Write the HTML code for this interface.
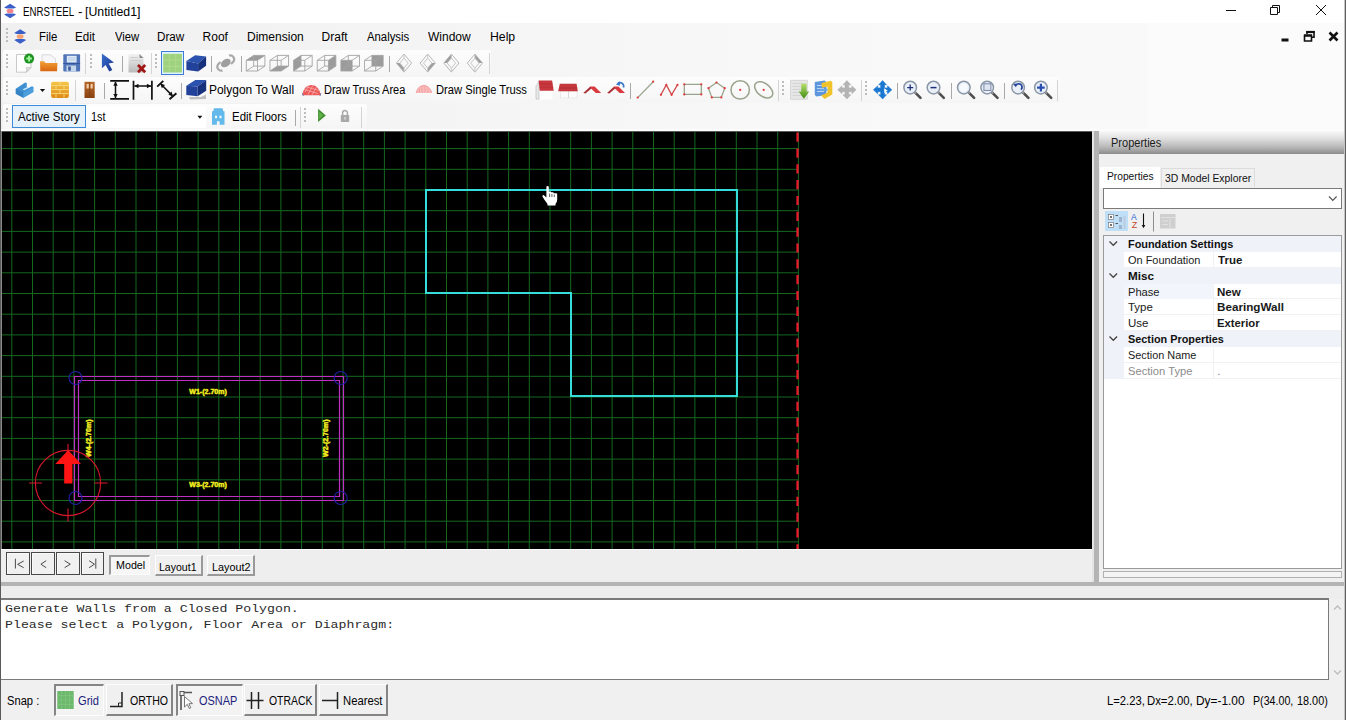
<!DOCTYPE html>
<html lang="en"><head><meta charset="utf-8"><title>ENRSTEEL - [Untitled1]</title>
<style>
html,body{margin:0;padding:0}
body{width:1346px;height:720px;overflow:hidden;background:#f0f0f0;position:relative;font-family:"Liberation Sans",sans-serif}
.a{position:absolute}
.t{position:absolute;white-space:pre;transform-origin:0 50%;display:block}
svg{position:absolute;overflow:visible}
.sep{position:absolute;width:1px;background:#a9a9a9}
.sepl{position:absolute;width:1px;background:#d4d4d4}
.grip{position:absolute;width:2px;height:2px;background:#bcbcbc;box-shadow:0 4px 0 #bcbcbc,0 8px 0 #bcbcbc,0 12px 0 #bcbcbc}
.tb{position:absolute;background:linear-gradient(#fdfdfd,#f5f5f5);border-radius:2px}
</style></head>
<body>
<div class="a" style="left:0;top:0;width:1346px;height:23px;background:#fff"></div>
<span class="t" style="left:22.9px;top:6px;font:400 12px/12px 'Liberation Sans',sans-serif;color:#000;transform:scaleX(0.8065);">ENRSTEEL </span><span class="t" style="left:78.0px;top:6px;font:400 12px/12px 'Liberation Sans',sans-serif;color:#000;transform:scaleX(1.1000);">- </span><span class="t" style="left:85.3px;top:6px;font:400 12px/12px 'Liberation Sans',sans-serif;color:#000;transform:scaleX(1.0267);">[Untitled1]</span>
<svg style="left:1220px;top:0" width="120" height="22" viewBox="1220 0 120 22" fill="none" stroke="#111" stroke-width="1">
<path d="M1226 10.5h10"/>
<path d="M1270.5 7.5h7v7h-7z M1272.5 7.5v-2h7v7h-2"/>
<path d="M1316 5l10 10M1326 5l-10 10"/></svg>
<div class="a" style="left:0;top:23px;width:1346px;height:108px;background:linear-gradient(to right,#f0f0f0 0,#f5f5f5 500px,#f8f8f8 750px,#f9f9f9 1147px,#fbfbfb 1148px)"></div>
<div class="grip" style="left:6px;top:28px"></div>
<span class="t" style="left:39.1px;top:31px;font:400 12px/12px 'Liberation Sans',sans-serif;color:#000;transform:scaleX(0.9465);">File</span>
<span class="t" style="left:75.0px;top:31px;font:400 12px/12px 'Liberation Sans',sans-serif;color:#000;transform:scaleX(0.9671);">Edit</span>
<span class="t" style="left:114.7px;top:31px;font:400 12px/12px 'Liberation Sans',sans-serif;color:#000;transform:scaleX(0.9398);">View</span>
<span class="t" style="left:157.3px;top:31px;font:400 12px/12px 'Liberation Sans',sans-serif;color:#000;transform:scaleX(0.9741);">Draw</span>
<span class="t" style="left:202.6px;top:31px;font:400 12px/12px 'Liberation Sans',sans-serif;color:#000;transform:scaleX(1.0000);">Roof</span>
<span class="t" style="left:246.5px;top:31px;font:400 12px/12px 'Liberation Sans',sans-serif;color:#000;transform:scaleX(1.0018);">Dimension</span>
<span class="t" style="left:321.6px;top:31px;font:400 12px/12px 'Liberation Sans',sans-serif;color:#000;transform:scaleX(1.0000);">Draft</span>
<span class="t" style="left:367.0px;top:31px;font:400 12px/12px 'Liberation Sans',sans-serif;color:#000;transform:scaleX(0.9446);">Analysis</span>
<span class="t" style="left:428.3px;top:31px;font:400 12px/12px 'Liberation Sans',sans-serif;color:#000;transform:scaleX(1.0012);">Window</span>
<span class="t" style="left:489.7px;top:31px;font:400 12px/12px 'Liberation Sans',sans-serif;color:#000;transform:scaleX(1.0194);">Help</span>
<svg style="left:1278px;top:28px" width="64" height="16" viewBox="1278 28 64 16" fill="none" stroke="#111">
<path d="M1281.5 40h7" stroke-width="3"/>
<path d="M1304.5 35.5h7v5.5h-7z" stroke-width="1.6"/><path d="M1304 35.5h8" stroke-width="2.4"/>
<path d="M1307 34v-2.2h7v5.5h-2" stroke-width="1.6"/><path d="M1306.3 32h8.4" stroke-width="2.2"/>
<path d="M1329.5 32.5l8 8M1337.5 32.5l-8 8" stroke-width="2.6"/></svg>
<div class="tb" style="left:3px;top:50px;width:488px;height:26px"></div>
<div class="tb" style="left:3px;top:77px;width:1057px;height:26px"></div>
<div class="tb" style="left:3px;top:104px;width:364px;height:25px"></div><div class="a" style="left:1px;top:129px;width:1344px;height:2px;background:#fcfcfc"></div>
<div class="grip" style="left:6px;top:54px"></div>
<div class="grip" style="left:90px;top:54px"></div>
<div class="grip" style="left:155px;top:54px"></div>
<div class="grip" style="left:6px;top:81px"></div>
<div class="grip" style="left:782px;top:81px"></div>
<div class="grip" style="left:865px;top:81px"></div>
<div class="grip" style="left:6px;top:108px"></div>
<div class="grip" style="left:304px;top:108px"></div>
<div class="sep" style="left:122px;top:56px;height:16px"></div>
<div class="sep" style="left:211px;top:56px;height:16px"></div>
<div class="sep" style="left:241px;top:56px;height:16px"></div>
<div class="sep" style="left:389px;top:56px;height:16px"></div>
<div class="sepl" style="left:85px;top:53px;height:21px"></div>
<div class="sepl" style="left:151px;top:53px;height:21px"></div>
<div class="sepl" style="left:489px;top:53px;height:21px"></div>
<div class="sep" style="left:104px;top:83px;height:16px"></div>
<div class="sep" style="left:181px;top:83px;height:16px"></div>
<div class="sep" style="left:630px;top:83px;height:16px"></div>
<div class="sep" style="left:897px;top:83px;height:16px"></div>
<div class="sep" style="left:951px;top:83px;height:16px"></div>
<div class="sep" style="left:1004px;top:83px;height:16px"></div>
<div class="sepl" style="left:75px;top:80px;height:21px"></div>
<div class="sepl" style="left:778px;top:80px;height:21px"></div>
<div class="sepl" style="left:861px;top:80px;height:21px"></div>
<div class="sepl" style="left:1057px;top:80px;height:21px"></div>
<div class="sep" style="left:295px;top:110px;height:16px"></div>
<div class="sepl" style="left:300px;top:107px;height:21px"></div>
<div class="sepl" style="left:361px;top:107px;height:21px"></div>
<span class="t" style="left:209.0px;top:84px;font:400 12px/12px 'Liberation Sans',sans-serif;color:#000;transform:scaleX(0.9964);">Polygon To Wall</span>
<span class="t" style="left:323.8px;top:84px;font:400 12px/12px 'Liberation Sans',sans-serif;color:#000;transform:scaleX(0.9174);">Draw Truss Area</span>
<span class="t" style="left:436.1px;top:84px;font:400 12px/12px 'Liberation Sans',sans-serif;color:#000;transform:scaleX(0.9333);">Draw Single Truss</span>
<div class="a" style="left:12px;top:105px;width:74px;height:23px;box-sizing:border-box;background:#e5f1fb;border:1px solid #3c8ad8"></div>
<span class="t" style="left:17.5px;top:111px;font:400 12px/12px 'Liberation Sans',sans-serif;color:#000;transform:scaleX(0.9656);">Active Story</span>
<div class="a" style="left:86px;top:106px;width:120px;height:22px;background:#fff"></div>
<span class="t" style="left:90.8px;top:111px;font:400 12px/12px 'Liberation Sans',sans-serif;color:#000;transform:scaleX(0.9067);">1st</span>
<span class="t" style="left:231.8px;top:111px;font:400 12px/12px 'Liberation Sans',sans-serif;color:#000;transform:scaleX(0.9554);">Edit Floors</span>
<svg style="left:0;top:0" width="1346" height="135" viewBox="0 0 1346 135">
<defs><linearGradient id="gOr" x1="0" y1="0" x2="0" y2="1"><stop offset="0" stop-color="#f3a23a"/><stop offset="1" stop-color="#d8650e"/></linearGradient><linearGradient id="gWall" x1="0" y1="0" x2="0" y2="1"><stop offset="0" stop-color="#f5c64a"/><stop offset="1" stop-color="#dd8a16"/></linearGradient><linearGradient id="gDoor" x1="0" y1="0" x2="0" y2="1"><stop offset="0" stop-color="#b96a2c"/><stop offset="1" stop-color="#8a4212"/></linearGradient><linearGradient id="gDoc" x1="0" y1="0" x2="0" y2="1"><stop offset="0" stop-color="#f2f2f2"/><stop offset="1" stop-color="#b9b9b9"/></linearGradient><linearGradient id="gArr" x1="0" y1="0" x2="1" y2="1"><stop offset="0" stop-color="#3b6fd0"/><stop offset="1" stop-color="#17348c"/></linearGradient><linearGradient id="gGrn" x1="0" y1="0" x2="0" y2="1"><stop offset="0" stop-color="#b6e06a"/><stop offset="1" stop-color="#3f8a10"/></linearGradient></defs>
<g transform="translate(10.1,11)"><path d="M0 -7.300L6 -3.600L3.600 -2.500H-3.600L-6 -3.600Z" fill="#3b5fc9"/><path d="M0 7.300L6 3.600L3.600 2.500H-3.600L-6 3.600Z" fill="#3b5fc9"/><ellipse cx="0" cy="0" rx="3.400" ry="2.300" fill="#f2848c"/></g>
<g transform="translate(20.2,36.5)"><path d="M0 -7.300L6 -3.600L3.600 -2.500H-3.600L-6 -3.600Z" fill="#3b5fc9"/><path d="M0 7.300L6 3.600L3.600 2.500H-3.600L-6 3.600Z" fill="#3b5fc9"/><ellipse cx="0" cy="0" rx="3.400" ry="2.300" fill="#f3a074"/></g>
<path d="M16.500 54.500H31V67.500L26.500 72.200H16.500Z" fill="#fdfdfd" stroke="#c9c9c9" stroke-width="1"/><path d="M31 67.500H26.500V72.200Z" fill="#dedede" stroke="#c0c0c0" stroke-width=".7"/><circle cx="29.100" cy="58.600" r="5" fill="#1f9322"/><path d="M26.300 58.600H31.900M29.100 55.800V61.400" stroke="#9cf59a" stroke-width="2"/>
<path d="M42 54.800H50.500L55.500 58.800V66H42Z" fill="#f6f6f8" stroke="#d0d0d8" stroke-width=".8"/><path d="M40 61.200H44.200L45.400 62.900H57.500L57 71.300H40.300Z" fill="url(#gOr)"/>
<rect x="63.300" y="54.300" width="16.800" height="17.200" rx="1" fill="#4f74b8"/><rect x="66.800" y="55.800" width="9.800" height="6.700" fill="#dbe9f6"/><path d="M68 58H75.500M68 60H75.500" stroke="#a9c0dc" stroke-width=".7"/><rect x="66.500" y="65.500" width="9.600" height="6" fill="#c3d6ec"/><rect x="68.200" y="66.500" width="2.600" height="4.200" fill="#3a5a9a"/><path d="M63.300 63.500H80.100" stroke="#35569c" stroke-width="1"/>
<path d="M101.900 53.600V68.200L105.600 64.900L109.300 71.500L112.300 70L108.700 63.500L114 62.400Z" fill="url(#gArr)"/>
<path d="M128.500 54H139.500L143.500 58V72.500H128.500Z" fill="url(#gDoc)"/><path d="M139.500 54V58H143.500Z" fill="#8d8d8d"/><path d="M130.500 57.500H138M130.500 60.500H141.500" stroke="#c9c9c9" stroke-width=".8"/><path d="M138 65L145.200 72.200M145.200 65L138 72.200" stroke="#a01414" stroke-width="2.700"/>
<rect x="161.500" y="51.500" width="22" height="23" fill="#dff4fe" stroke="#3d7bd8" stroke-width="1"/><rect x="163.200" y="53.800" width="18.700" height="18.700" fill="#9fd27f"/><path d="M169.400 53.800V72.500M175.700 53.800V72.500M163.200 60H181.900M163.200 66.300H181.900" stroke="#b4dc90" stroke-width=".8"/>
<path d="M186.400 61L195.100 55.300L206.100 56.400L198.100 63.400Z" fill="#2b52ae"/><path d="M186.400 61L198.100 63.400V71.500L186.400 70.100Z" fill="#21419a"/><path d="M198.100 63.400L206.100 56.400V65.700L198.100 71.500Z" fill="#17307c"/>
<g fill="none" stroke="#a9a9a9" stroke-width="2.200"><path d="M229 55.500A4 4 0 0 1 233.500 61.500L231 64"/><path d="M222.500 70.500A4 4 0 0 1 218 64.500L220.500 62"/></g><ellipse cx="225.800" cy="63" rx="5.400" ry="3.600" transform="rotate(-35 225.800 63)" fill="#9f9f9f"/>
<path d="M246.3 60.3L253.70000000000002 55.4L264.9 55.4L257.5 60.3Z" fill="#9b9b9b"/><path d="M246.3 60.3H257.5V71.0H246.3ZM253.70000000000002 55.4H264.9V66.1H253.70000000000002ZM246.3 60.3L253.70000000000002 55.4M257.5 60.3L264.9 55.4M246.3 71.0L253.70000000000002 66.1M257.5 71.0L264.9 66.1" fill="none" stroke="#a4a4a4" stroke-width=".9"/>
<path d="M269.95 71.0L277.34999999999997 66.1L288.54999999999995 66.1L281.15 71.0Z" fill="#9b9b9b"/><path d="M269.95 60.3H281.15V71.0H269.95ZM277.34999999999997 55.4H288.54999999999995V66.1H277.34999999999997ZM269.95 60.3L277.34999999999997 55.4M281.15 60.3L288.54999999999995 55.4M269.95 71.0L277.34999999999997 66.1M281.15 71.0L288.54999999999995 66.1" fill="none" stroke="#a4a4a4" stroke-width=".9"/>
<path d="M293.6 60.3L301.0 55.4L301.0 66.1L293.6 71.0Z" fill="#9b9b9b"/><path d="M293.6 60.3H304.8V71.0H293.6ZM301.0 55.4H312.2V66.1H301.0ZM293.6 60.3L301.0 55.4M304.8 60.3L312.2 55.4M293.6 71.0L301.0 66.1M304.8 71.0L312.2 66.1" fill="none" stroke="#a4a4a4" stroke-width=".9"/>
<path d="M328.45 60.3L335.84999999999997 55.4L335.84999999999997 66.1L328.45 71.0Z" fill="#9b9b9b"/><path d="M317.25 60.3H328.45V71.0H317.25ZM324.65 55.4H335.84999999999997V66.1H324.65ZM317.25 60.3L324.65 55.4M328.45 60.3L335.84999999999997 55.4M317.25 71.0L324.65 66.1M328.45 71.0L335.84999999999997 66.1" fill="none" stroke="#a4a4a4" stroke-width=".9"/>
<path d="M340.9 60.3H352.09999999999997V71.0H340.9Z" fill="#9b9b9b"/><path d="M340.9 60.3H352.09999999999997V71.0H340.9ZM348.29999999999995 55.4H359.49999999999994V66.1H348.29999999999995ZM340.9 60.3L348.29999999999995 55.4M352.09999999999997 60.3L359.49999999999994 55.4M340.9 71.0L348.29999999999995 66.1M352.09999999999997 71.0L359.49999999999994 66.1" fill="none" stroke="#a4a4a4" stroke-width=".9"/>
<path d="M371.95 55.4H383.15V66.1H371.95Z" fill="#9b9b9b"/><path d="M364.55 60.3H375.75V71.0H364.55ZM371.95 55.4H383.15V66.1H371.95ZM364.55 60.3L371.95 55.4M375.75 60.3L383.15 55.4M364.55 71.0L371.95 66.1M375.75 71.0L383.15 66.1" fill="none" stroke="#a4a4a4" stroke-width=".9"/>
<g transform="translate(404,63.1)" fill="none" stroke="#b0b0b0" stroke-width=".9"><path d="M-7.600 0L0 9L0 5L-4.200 0Z" fill="#9c9c9c" stroke="none"/><path d="M0 -9L7.600 0L0 9L-7.600 0Z"/><path d="M0 -5L4.200 0L0 5L-4.200 0Z" stroke="#c0c0c0"/><path d="M0 -9V-5M0 9V5" stroke="#c4c4c4"/></g>
<g transform="translate(427.7,63.1)" fill="none" stroke="#b0b0b0" stroke-width=".9"><path d="M7.600 0L0 9L0 5L4.200 0Z" fill="#9c9c9c" stroke="none"/><path d="M0 -9L7.600 0L0 9L-7.600 0Z"/><path d="M0 -5L4.200 0L0 5L-4.200 0Z" stroke="#c0c0c0"/><path d="M0 -9V-5M0 9V5" stroke="#c4c4c4"/></g>
<g transform="translate(451.4,63.1)" fill="none" stroke="#b0b0b0" stroke-width=".9"><path d="M-7.600 0L0 -9L0 -5L-4.200 0Z" fill="#9c9c9c" stroke="none"/><path d="M0 -9L7.600 0L0 9L-7.600 0Z"/><path d="M0 -5L4.200 0L0 5L-4.200 0Z" stroke="#c0c0c0"/><path d="M0 -9V-5M0 9V5" stroke="#c4c4c4"/></g>
<g transform="translate(474.9,63.1)" fill="none" stroke="#b0b0b0" stroke-width=".9"><path d="M7.600 0L0 -9L0 -5L4.200 0Z" fill="#9c9c9c" stroke="none"/><path d="M0 -9L7.600 0L0 9L-7.600 0Z"/><path d="M0 -5L4.200 0L0 5L-4.200 0Z" stroke="#c0c0c0"/><path d="M0 -9V-5M0 9V5" stroke="#c4c4c4"/></g>
<path d="M15.800 88.800L25.200 82.500L26.800 83V87.500L28.700 88L32 86.300L33.300 87V92L23.300 97.700L15.800 93.700Z" fill="#3f90d2"/><path d="M15.800 88.800L23.300 92.600V97.700L15.800 93.700Z" fill="#3582c4"/><path d="M23.300 92.600L33.300 87V92L23.300 97.700Z" fill="#4b9fdc"/><path d="M22.500 89.500L26.800 87.300L28.700 88L24.300 90.300Z" fill="#c9ebfc"/>
<path d="M39.900 88.900H45.100L42.500 92Z" fill="#111"/>
<rect x="51.100" y="81.800" width="17.800" height="16.200" rx="2" fill="url(#gWall)"/><path d="M51.500 85.500H68.500M51.500 89.500H68.500M51.500 93.500H68.500M60 82V85.500M56 85.500V89.500M64 85.500V89.500M60 89.500V93.500M56 93.500V97.800M64 93.500V97.800" stroke="#f8dc80" stroke-width=".8"/>
<rect x="84.500" y="81.800" width="10.200" height="16.200" fill="url(#gDoor)"/><rect x="86.600" y="84" width="2.200" height="4.500" fill="#f3cda6"/><rect x="90.500" y="84" width="2.200" height="4.500" fill="#f3cda6"/><path d="M89.600 82V98" stroke="#7a3a10" stroke-width=".6"/>
<g stroke="#111" stroke-width="1.500" fill="#111"><path d="M110.200 80.800H129M110.200 98.900H129" stroke-width="1.700"/><path d="M115.500 82V98"/><path d="M115.500 81.600L113.300 85.800H117.700ZM115.500 98.100L113.300 93.900H117.700Z" stroke="none"/><path d="M133.500 80.700V99.700M151.900 80.700V99.700" stroke-width="1.700"/><path d="M134.500 86H151"/><path d="M134.300 86L138.500 83.800V88.200ZM151.100 86L146.900 83.800V88.200Z" stroke="none"/><path d="M157.200 86.600L163.300 80.900M169.500 99.300L176.400 93.200" stroke-width="1.900"/><path d="M161 84.200L172.300 95.600"/><path d="M160.400 83.600L165 85L161.800 88.200ZM172.900 96.200L168.300 94.800L171.500 91.600Z" stroke="none"/></g>
<path d="M189 97L201 97L206 94.500L206 99L190 99.500Z" fill="#9b9b9b" opacity=".6"/><path d="M186.300 85.800L195.300 80.100L206.200 80.100L197.600 86.600Z" fill="#2b52ae"/><path d="M186.300 85.800L197.600 86.600V96.300L186.300 95Z" fill="#21419a"/><path d="M197.600 86.600L206.200 80.100V90.800L197.600 96.300Z" fill="#17307c"/>
<path d="M302.500 95.300C303 88.500 307 85 311.500 85C316 85 320 89 320.600 95.300Z" fill="#ec5a5a"/><path d="M305 92L309 85.500M308 94.500L313 85.200M312 95L316.500 87M304 89.500L318 93.500M306.500 87L319.500 90.500" stroke="#f9b4b4" stroke-width=".7" fill="none"/><path d="M302.300 93L303.300 96M320.800 93L320 96" stroke="#7d7fa8" stroke-width="1"/>
<path d="M416.200 92.900C417.700 87.600 420.300 85.600 423.800 85.600C427.300 85.600 430.200 87.600 431.700 92.900Z" fill="#f8bcbc"/><path d="M416.200 92.900C417.700 87.600 420.300 85.600 423.800 85.600C427.300 85.600 430.200 87.600 431.700 92.900" fill="none" stroke="#f29090" stroke-width=".9"/><path d="M419.500 92.500V88.500M422 92.500V86.500M425 92.500V86.500M427.800 92.500V88.500" stroke="#f29a9a" stroke-width=".8"/>
<path d="M536 99V86L539 81.500V99Z" fill="#e9e9e9" stroke="#b7b7b7" stroke-width=".6"/><rect x="539.800" y="90.700" width="12.700" height="8.600" fill="#fdfdfd"/><path d="M538.600 80.500H552.100L553.700 90.700H539.800Z" fill="#c8373d"/><path d="M539.200 84H552.600M539.600 87.300H553.200" stroke="#b42d33" stroke-width=".6"/>
<rect x="560.500" y="91" width="16.500" height="7" fill="#fbfbfb" stroke="#dcdcdc" stroke-width=".5"/><path d="M568.500 91V98" stroke="#d0d0d0" stroke-width=".8"/><path d="M559.800 83.800H576.600L577.800 91.200H558.200Z" fill="#c4373c"/><path d="M559 88H577.200" stroke="#a92d32" stroke-width=".6"/>
<g transform="translate(0,0)"><path d="M583.300 93L590.300 86.600L592 88L585.500 93.600Z" fill="#a93236"/><path d="M590.300 86.600H594.600L601.200 93H595.800L591.300 88.700Z" fill="#d83a3f"/></g>
<g transform="translate(23.8,0)"><path d="M583.300 93L590.300 86.600L592 88L585.500 93.600Z" fill="#a93236"/><path d="M590.300 86.600H594.600L601.200 93H595.800L591.300 88.700Z" fill="#d83a3f"/></g>
<path d="M617.800 83.600A3.600 3.600 0 0 1 623.600 85.200V87.500" fill="none" stroke="#3b79c8" stroke-width="1.700"/><path d="M615.800 84.600L619.800 81.300L620 85.800Z" fill="#3b79c8"/>
<g fill="none" stroke="#9aa48c" stroke-width="1.300"><path d="M637.700 97.600L653.200 81.700"/><path d="M660.900 94.800L666.300 84.900L671.600 94.800L677.500 84.900" stroke="#d04a4a"/><path d="M684.300 84.300H701.300V94.400H684.300Z"/><path d="M716.500 82.500L724.700 88.200L721.300 97.400H711.800L708.500 88.200Z"/><circle cx="740.200" cy="89.900" r="9.200" stroke-width="1.500"/><ellipse cx="763.700" cy="89.900" rx="10.300" ry="6.400" transform="rotate(38 763.700 89.900)" stroke-width="1.500"/></g>
<g fill="#e23a3a"><circle cx="637.7" cy="97.6" r="1.100"/><circle cx="653.2" cy="81.7" r="1.100"/><circle cx="660.9" cy="94.8" r="1.100"/><circle cx="666.3" cy="84.9" r="1.100"/><circle cx="671.6" cy="94.8" r="1.100"/><circle cx="677.5" cy="84.9" r="1.100"/><circle cx="684.3" cy="84.3" r="1.100"/><circle cx="701.3" cy="84.3" r="1.100"/><circle cx="701.3" cy="94.4" r="1.100"/><circle cx="684.3" cy="94.4" r="1.100"/><circle cx="716.5" cy="82.5" r="1.100"/><circle cx="724.7" cy="88.2" r="1.100"/><circle cx="721.3" cy="97.4" r="1.100"/><circle cx="711.8" cy="97.4" r="1.100"/><circle cx="708.5" cy="88.2" r="1.100"/><circle cx="740.2" cy="89.9" r="1.100"/><circle cx="763.7" cy="89.9" r="1.100"/></g>
<rect x="790.700" y="80.200" width="16.500" height="19" fill="#e6e6e6" stroke="#c6c6c6" stroke-width=".6"/><path d="M792.500 83.500H805.500M792.500 86.500H805.500M792.500 89.500H805.500M792.500 92.500H805.500M792.500 95.500H805.500" stroke="#cfcfcf" stroke-width=".8"/><path d="M801.200 83.800H806.600V91.500H809.200L803.900 98.800L798.600 91.500H801.200Z" fill="url(#gGrn)"/>
<path d="M814.800 82L824.500 80.500L826.400 82V95L816.500 96.500L814.800 95Z" fill="#5d96dc"/><path d="M817 85.500H824M817 88.500H824M817 91.500H824" stroke="#bcd6f3" stroke-width="1"/><path d="M821.500 83L831 80.800L832.300 82.200V94.500L824.500 99L821.200 95.500L827.500 92.500V86.500L822 87.800Z" fill="#f1c32b"/><path d="M819.500 89.800H827.500" stroke="#6aa5e4" stroke-width="2.200"/>
<g transform="translate(846.9,89.8)" fill="#b4b4b4"><path d="M0 -9.200L3.900 -5H1.900V-1.900H5V-3.900L9.200 0L5 3.900V1.900H1.900V5H3.900L0 9.200L-3.900 5H-1.900V1.900H-5V3.900L-9.200 0L-5 -3.900V-1.900H-1.900V-5H-3.900Z" stroke="#b4b4b4" stroke-width=".6" stroke-linejoin="round"/></g>
<g transform="translate(882.6,89.8)" fill="#1b78d2"><path d="M0 -9.200L3.900 -5H1.900V-1.900H5V-3.900L9.200 0L5 3.900V1.900H1.900V5H3.900L0 9.200L-3.900 5H-1.900V1.900H-5V3.900L-9.200 0L-5 -3.900V-1.900H-1.900V-5H-3.900Z" stroke="#1b78d2" stroke-width=".6" stroke-linejoin="round"/></g>
<path d="M884.200 88.200L887.600 90.600L884.200 93Z" fill="#fff"/>
<g transform="translate(910.2,87.6)"><path d="M4.800 4.800L10.300 10.300" stroke="#4e4e4e" stroke-width="2.600" stroke-linecap="round"/><path d="M4.200 4.200L6 6" stroke="#9a9a9a" stroke-width="1.600"/><circle cx="0" cy="0" r="6.300" fill="#e9f0f9" stroke="#8b97a6" stroke-width="1.500"/><path d="M-3 0H3M0 -3V3" stroke="#1f2f78" stroke-width="1.300"/></g>
<g transform="translate(933.5,87.6)"><path d="M4.800 4.800L10.300 10.300" stroke="#4e4e4e" stroke-width="2.600" stroke-linecap="round"/><path d="M4.200 4.200L6 6" stroke="#9a9a9a" stroke-width="1.600"/><circle cx="0" cy="0" r="6.300" fill="#e9f0f9" stroke="#8b97a6" stroke-width="1.500"/><path d="M-3 0H3" stroke="#1f2f78" stroke-width="1.500"/></g>
<g transform="translate(963.8,87.6)"><path d="M4.800 4.800L10.300 10.300" stroke="#4e4e4e" stroke-width="2.600" stroke-linecap="round"/><path d="M4.200 4.200L6 6" stroke="#9a9a9a" stroke-width="1.600"/><circle cx="0" cy="0" r="6.300" fill="#e9f0f9" stroke="#8b97a6" stroke-width="1.500"/><circle cx="0" cy="0" r="4.300" fill="#f6f9fd"/></g>
<g transform="translate(987.2,87.6)"><path d="M4.800 4.800L10.300 10.300" stroke="#4e4e4e" stroke-width="2.600" stroke-linecap="round"/><path d="M4.200 4.200L6 6" stroke="#9a9a9a" stroke-width="1.600"/><circle cx="0" cy="0" r="6.300" fill="#e9f0f9" stroke="#8b97a6" stroke-width="1.500"/><rect x="-3.300" y="-3.800" width="7" height="6.600" fill="#dfe6f2" stroke="#7b86a6" stroke-width="1"/></g>
<g transform="translate(1018.1,87.6)"><path d="M4.800 4.800L10.300 10.300" stroke="#4e4e4e" stroke-width="2.600" stroke-linecap="round"/><path d="M4.200 4.200L6 6" stroke="#9a9a9a" stroke-width="1.600"/><circle cx="0" cy="0" r="6.300" fill="#e9f0f9" stroke="#8b97a6" stroke-width="1.500"/><path d="M-2.500 -1.500A3.300 3.300 0 1 1 2.800 2" fill="none" stroke="#28489c" stroke-width="1.800"/><path d="M-5 -3.500L-1.200 -4.200L-2.200 -0.300Z" fill="#28489c"/></g>
<g transform="translate(1040.9,87.6)"><path d="M4.800 4.800L10.300 10.300" stroke="#4e4e4e" stroke-width="2.600" stroke-linecap="round"/><path d="M4.200 4.200L6 6" stroke="#9a9a9a" stroke-width="1.600"/><circle cx="0" cy="0" r="6.300" fill="#e9f0f9" stroke="#8b97a6" stroke-width="1.500"/><path d="M-3.800 0H3.800M0 -3.800V3.800" stroke="#2a4eb0" stroke-width="2.200"/></g>
<path d="M197.400 115.700H202.400L199.900 118.700Z" fill="#111"/>
<path d="M214 108.200H222.500L223.300 111.300H224.500V124.700H219.600V121.200H216.900V124.700H212V111.300H213.200Z" fill="#62b9ea"/><rect x="215" y="115.700" width="2" height="2.500" fill="#f2fbff"/><rect x="219.500" y="115.700" width="2" height="2.500" fill="#f2fbff"/>
<path d="M318.100 108.700L325.800 115.400L318.100 122.100Z" fill="#3c8e2a"/><path d="M319.200 111.500L323.500 115.400L319.200 119.200Z" fill="#63b14a"/>
<rect x="340.800" y="115" width="8.400" height="7" rx=".8" fill="#a9a9a9"/><path d="M342.600 115V113A2.400 2.400 0 0 1 347.400 113V115" fill="none" stroke="#a9a9a9" stroke-width="1.500"/><rect x="344.400" y="117" width="1.200" height="2.600" fill="#e4e4e4"/>
</svg>
<div class="a" style="left:1px;top:131px;width:1091px;height:418px;background:#8a8a8a"></div>
<div class="a" style="left:1px;top:549px;width:1092px;height:1px;background:#fafafa"></div>
<div class="a" style="left:2px;top:131px;width:1090px;height:1px;background:#5a5a5a"></div>
<div class="a" style="left:2px;top:132px;width:1090px;height:417px;background:#000"></div>
<svg style="left:0;top:0" width="1346" height="720" viewBox="0 0 1346 720">
<path d="M11.80 132V549M32.50 132V549M53.20 132V549M73.90 132V549M94.60 132V549M115.30 132V549M136.00 132V549M156.70 132V549M177.40 132V549M198.10 132V549M218.80 132V549M239.50 132V549M260.20 132V549M280.90 132V549M301.60 132V549M322.30 132V549M343.00 132V549M363.70 132V549M384.40 132V549M405.10 132V549M425.80 132V549M446.50 132V549M467.20 132V549M487.90 132V549M508.60 132V549M529.30 132V549M550.00 132V549M570.70 132V549M591.40 132V549M612.10 132V549M632.80 132V549M653.50 132V549M674.20 132V549M694.90 132V549M715.60 132V549M736.30 132V549M757.00 132V549M777.70 132V549M798.40 132V549M2 148.60H798M2 169.30H798M2 190.00H798M2 210.70H798M2 231.40H798M2 252.10H798M2 272.80H798M2 293.50H798M2 314.20H798M2 334.90H798M2 355.60H798M2 376.30H798M2 397.00H798M2 417.70H798M2 438.40H798M2 459.10H798M2 479.80H798M2 500.50H798M2 521.20H798M2 541.90H798" stroke="#15691f" stroke-width="1" fill="none"/>
<path d="M797.5 132V549" stroke="#f0182e" stroke-width="2.2" stroke-dasharray="9.2 6.63" stroke-dashoffset="-0.6" fill="none"/>
<path d="M426 190H737V396H571V293H426Z" stroke="#35dcd8" stroke-width="2" fill="none" stroke-linejoin="miter"/>
<path d="M74.5 376.5H343.5V500.5H74.5Z M78.5 380.5H339.5V496.5H78.5Z" stroke="#c02fc4" stroke-width="1.2" fill="none"/>
<circle cx="75.5" cy="378" r="6.5" stroke="#2220a8" stroke-width="1.1" fill="none"/>
<circle cx="340.7" cy="378" r="6.5" stroke="#2220a8" stroke-width="1.1" fill="none"/>
<circle cx="75.5" cy="498" r="6.5" stroke="#2220a8" stroke-width="1.1" fill="none"/>
<circle cx="340.7" cy="498" r="6.5" stroke="#2220a8" stroke-width="1.1" fill="none"/>
<text x="189.3" y="394" textLength="37.5" lengthAdjust="spacingAndGlyphs" fill="#f6f220" stroke="#f6f220" stroke-width=".4" style="font-family:'Liberation Sans',sans-serif;font-weight:700;font-size:6.6px">W1-(2.70m)</text>
<text x="189.3" y="487" textLength="37.5" lengthAdjust="spacingAndGlyphs" fill="#f6f220" stroke="#f6f220" stroke-width=".4" style="font-family:'Liberation Sans',sans-serif;font-weight:700;font-size:6.6px">W3-(2.70m)</text>
<text transform="translate(90.8,457) rotate(-90)" textLength="37.5" lengthAdjust="spacingAndGlyphs" fill="#f6f220" stroke="#f6f220" stroke-width=".4" style="font-family:'Liberation Sans',sans-serif;font-weight:700;font-size:6.6px">W4-(2.70m)</text>
<text transform="translate(328.3,457) rotate(-90)" textLength="37.5" lengthAdjust="spacingAndGlyphs" fill="#f6f220" stroke="#f6f220" stroke-width=".4" style="font-family:'Liberation Sans',sans-serif;font-weight:700;font-size:6.6px">W2-(2.70m)</text>
<circle cx="68" cy="483" r="32.6" stroke="#d8182c" stroke-width="1.1" fill="none"/>
<path d="M29 483H42M94.5 483H107.5M68 444V451M68 508.5V521.5" stroke="#d8182c" stroke-width="1.1" fill="none"/>
<path d="M68.2 450L81 464H72.4V483.5H64.2V464H55.4Z" fill="#ff1414"/>
<path d="M546.4 187Q546.4 186 547.6 186Q548.8 186 548.8 187V191.5H551V192.3H553.5V193.3H556Q557.2 193.3 557.2 194.5V199.5Q557.2 202 555.5 204V205.5H547.5V204L544.6 200L542.4 196.6Q542.2 195 543.6 195L546.4 197.6Z" fill="#fff"/>
<path d="M549.6 193.5V197M551.9 194V197M554.3 194.6V197" stroke="#222" stroke-width=".7"/>
</svg>
<div class="a" style="left:1px;top:550px;width:1093px;height:32px;background:#eeeeee"></div>
<div class="a" style="left:6px;top:552px;width:24px;height:23px;box-sizing:border-box;border:1px solid #484848;background:#f0f0f0;box-shadow:inset 1px 1px 0 #fafafa"></div>
<div class="a" style="left:31px;top:552px;width:24px;height:23px;box-sizing:border-box;border:1px solid #484848;background:#f0f0f0;box-shadow:inset 1px 1px 0 #fafafa"></div>
<div class="a" style="left:56px;top:552px;width:24px;height:23px;box-sizing:border-box;border:1px solid #484848;background:#f0f0f0;box-shadow:inset 1px 1px 0 #fafafa"></div>
<div class="a" style="left:81px;top:552px;width:23px;height:23px;box-sizing:border-box;border:1px solid #484848;background:#f0f0f0;box-shadow:inset 1px 1px 0 #fafafa"></div>
<svg style="left:0;top:548px" width="110" height="30" viewBox="0 548 110 30" fill="none" stroke="#4a4a4a" stroke-width="1">
<path d="M15.400 558.700V568.500M23.700 561L17.600 564.300L23.700 567.700"/>
<path d="M46.200 560.700L40.900 564.200L46.200 567.700"/>
<path d="M64.600 560.700L70.300 564.200L64.600 567.700"/>
<path d="M89.100 560.700L94.500 564.200L89.100 567.700M95.800 558.500V568.700"/></svg>
<div class="a" style="left:109px;top:555px;width:41px;height:20px;background:#f6f6f6;box-sizing:border-box;border-top:2px solid #999;border-left:2px solid #999;border-right:1px solid #fdfdfd;border-bottom:1px solid #fdfdfd"></div>
<span class="t" style="left:115.7px;top:560px;font:400 11px/11px 'Liberation Sans',sans-serif;color:#000;transform:scaleX(0.9735);">Model</span>
<div class="a" style="left:154.5px;top:555px;width:48.5px;height:20.5px;background:#f0f0f0;box-sizing:border-box;border-top:1px solid #fdfdfd;border-left:1px solid #fdfdfd;border-right:2px solid #999;border-bottom:2px solid #999"></div>
<span class="t" style="left:159.4px;top:562px;font:400 11px/11px 'Liberation Sans',sans-serif;color:#000;transform:scaleX(0.9589);">Layout1</span>
<div class="a" style="left:206.7px;top:555px;width:48.5px;height:20.5px;background:#f0f0f0;box-sizing:border-box;border-top:1px solid #fdfdfd;border-left:1px solid #fdfdfd;border-right:2px solid #999;border-bottom:2px solid #999"></div>
<span class="t" style="left:211.8px;top:562px;font:400 11px/11px 'Liberation Sans',sans-serif;color:#000;transform:scaleX(0.9840);">Layout2</span>
<div class="a" style="left:1092px;top:131px;width:2px;height:451px;background:#e4e4e4"></div>
<div class="a" style="left:1094px;top:131px;width:5px;height:451px;background:#b4b4b4"></div>
<div class="a" style="left:1099px;top:131px;width:246px;height:451px;background:#f0f0f0"></div>
<div class="a" style="left:1099px;top:131px;width:246px;height:23px;background:linear-gradient(#f8f8f8 0%,#e2e2e2 30%,#b8b8b8 70%,#8c8c8c 100%)"></div>
<span class="t" style="left:1110.8px;top:137px;font:400 12px/12px 'Liberation Sans',sans-serif;color:#1c1c1c;transform:scaleX(0.9183);">Properties</span>
<div class="a" style="left:1100px;top:167px;width:60px;height:21px;background:#fff;border-radius:1px"></div>
<div class="a" style="left:1160.5px;top:168px;width:94px;height:19px;box-sizing:border-box;background:#f0f0f0;border:1px solid #dcdcdc;border-bottom:none"></div>
<span class="t" style="left:1106.9px;top:171px;font:400 11px/11px 'Liberation Sans',sans-serif;color:#111;transform:scaleX(0.9292);">Properties</span>
<span class="t" style="left:1165.1px;top:173px;font:400 11px/11px 'Liberation Sans',sans-serif;color:#111;transform:scaleX(0.9459);">3D Model Explorer</span>
<div class="a" style="left:1103px;top:188px;width:239px;height:21px;box-sizing:border-box;background:#fff;border:1px solid #7a7a7a"></div>
<svg style="left:1326px;top:192px" width="14" height="12" viewBox="1326 192 14 12" fill="none" stroke="#555" stroke-width="1.2"><path d="M1329 196.500L1332.800 200.300L1336.600 196.500"/></svg>
<div class="a" style="left:1105px;top:211px;width:23px;height:20px;background:#bfdef8"></div>
<svg style="left:1103px;top:209px" width="80" height="26" viewBox="1103 209 80 26" fill="none">
<g stroke="#7a7a7a" stroke-width=".7" fill="#fff"><rect x="1108.500" y="214.500" width="5" height="5"/><rect x="1108.500" y="222.500" width="5" height="5"/></g>
<path d="M1110 217H1112M1111 216V218M1110 225H1112M1111 224V226" stroke="#222" stroke-width=".8"/>
<path d="M1115.500 215.500H1118M1115.500 223.500H1118" stroke="#555" stroke-width="1"/>
<g fill="#9db4cc"><rect x="1119" y="217" width="3" height="5"/><rect x="1119" y="225" width="3" height="4"/><rect x="1123.500" y="216" width="2" height="13" fill="#b9cbdc"/></g>
<path d="M1153.500 211.500V231.500" stroke="#8e8e8e" stroke-width="1"/>
<path d="M1143.500 213.500V226.500" stroke="#111" stroke-width="1.100"/><path d="M1141.700 225L1143.500 228.300L1145.300 225Z" fill="#111"/>
<rect x="1160" y="214" width="15.500" height="14.500" fill="#cfcfcf"/>
<path d="M1161 217.500H1175M1162.500 221H1168M1162.500 224.500H1168M1170 219V227.500" stroke="#e2e2e2" stroke-width="1"/>
</svg>
<span class="t" style="left:1131.4px;top:213px;font:400 9px/9px 'Liberation Sans',sans-serif;color:#2d5fd0;transform:scaleX(0.9500);">A</span>
<span class="t" style="left:1131.8px;top:221px;font:400 9px/9px 'Liberation Sans',sans-serif;color:#c4472d;transform:scaleX(1.0000);">Z</span>
<div class="a" style="left:1103px;top:234.5px;width:239px;height:334px;box-sizing:border-box;background:#fff;border:1px solid #9a9a9a"></div>
<div class="a" style="left:1104px;top:236.00px;width:237px;height:16.00px;background:#eff2f8"></div>
<svg style="left:1108px;top:239.00px" width="12" height="10" viewBox="0 0 12 10" fill="none" stroke="#444" stroke-width="1.300"><path d="M1.500 2.500L5.300 6.300L9.100 2.500"/></svg>
<span class="t" style="left:1127.8px;top:239px;font:700 11px/11px 'Liberation Sans',sans-serif;color:#111;transform:scaleX(0.9900);">Foundation Settings</span>
<div class="a" style="left:1104px;top:252.00px;width:20px;height:16.00px;background:#eff2f8"></div>
<div class="a" style="left:1124px;top:267.00px;width:217px;height:1px;background:#f1f1f1"></div>
<div class="a" style="left:1213px;top:252.00px;width:1px;height:16.00px;background:#f1f1f1"></div>
<span class="t" style="left:1128.2px;top:255px;font:400 11px/11px 'Liberation Sans',sans-serif;color:#1a1a1a;transform:scaleX(0.9944);">On Foundation</span>
<span class="t" style="left:1218.3px;top:255px;font:700 11px/11px 'Liberation Sans',sans-serif;color:#1a1a1a;transform:scaleX(1.0478);">True</span>
<div class="a" style="left:1104px;top:268.00px;width:237px;height:16.00px;background:#eff2f8"></div>
<svg style="left:1108px;top:271.00px" width="12" height="10" viewBox="0 0 12 10" fill="none" stroke="#444" stroke-width="1.300"><path d="M1.500 2.500L5.300 6.300L9.100 2.500"/></svg>
<span class="t" style="left:1127.9px;top:271px;font:700 11px/11px 'Liberation Sans',sans-serif;color:#111;transform:scaleX(1.0624);">Misc</span>
<div class="a" style="left:1104px;top:284.00px;width:20px;height:15.00px;background:#eff2f8"></div>
<div class="a" style="left:1124px;top:298.00px;width:217px;height:1px;background:#f1f1f1"></div>
<div class="a" style="left:1213px;top:284.00px;width:1px;height:15.00px;background:#f1f1f1"></div>
<div class="a" style="left:1124px;top:284.00px;width:89px;height:15.00px;background:#f2f5fb"></div>
<span class="t" style="left:1127.7px;top:287px;font:400 11px/11px 'Liberation Sans',sans-serif;color:#1a1a1a;transform:scaleX(1.0118);">Phase</span>
<span class="t" style="left:1217.1px;top:287px;font:700 11px/11px 'Liberation Sans',sans-serif;color:#1a1a1a;transform:scaleX(1.0500);">New</span>
<div class="a" style="left:1104px;top:299.00px;width:20px;height:16.00px;background:#eff2f8"></div>
<div class="a" style="left:1124px;top:314.00px;width:217px;height:1px;background:#f1f1f1"></div>
<div class="a" style="left:1213px;top:299.00px;width:1px;height:16.00px;background:#f1f1f1"></div>
<span class="t" style="left:1128.0px;top:302px;font:400 11px/11px 'Liberation Sans',sans-serif;color:#1a1a1a;transform:scaleX(1.0409);">Type</span>
<span class="t" style="left:1217.1px;top:302px;font:700 11px/11px 'Liberation Sans',sans-serif;color:#1a1a1a;transform:scaleX(1.0607);">BearingWall</span>
<div class="a" style="left:1104px;top:315.00px;width:20px;height:16.00px;background:#eff2f8"></div>
<div class="a" style="left:1124px;top:330.00px;width:217px;height:1px;background:#f1f1f1"></div>
<div class="a" style="left:1213px;top:315.00px;width:1px;height:16.00px;background:#f1f1f1"></div>
<span class="t" style="left:1127.9px;top:318px;font:400 11px/11px 'Liberation Sans',sans-serif;color:#1a1a1a;transform:scaleX(1.0466);">Use</span>
<span class="t" style="left:1217.1px;top:318px;font:700 11px/11px 'Liberation Sans',sans-serif;color:#1a1a1a;transform:scaleX(1.0258);">Exterior</span>
<div class="a" style="left:1104px;top:331.00px;width:237px;height:16.00px;background:#eff2f8"></div>
<svg style="left:1108px;top:334.00px" width="12" height="10" viewBox="0 0 12 10" fill="none" stroke="#444" stroke-width="1.300"><path d="M1.500 2.500L5.300 6.300L9.100 2.500"/></svg>
<span class="t" style="left:1128.3px;top:334px;font:700 11px/11px 'Liberation Sans',sans-serif;color:#111;transform:scaleX(0.9865);">Section Properties</span>
<div class="a" style="left:1104px;top:347.00px;width:20px;height:16.00px;background:#eff2f8"></div>
<div class="a" style="left:1124px;top:362.00px;width:217px;height:1px;background:#f1f1f1"></div>
<div class="a" style="left:1213px;top:347.00px;width:1px;height:16.00px;background:#f1f1f1"></div>
<span class="t" style="left:1128.0px;top:350px;font:400 11px/11px 'Liberation Sans',sans-serif;color:#1a1a1a;transform:scaleX(0.9890);">Section Name</span>
<div class="a" style="left:1104px;top:363.00px;width:20px;height:16.00px;background:#eff2f8"></div>
<div class="a" style="left:1124px;top:378.00px;width:217px;height:1px;background:#f1f1f1"></div>
<div class="a" style="left:1213px;top:363.00px;width:1px;height:16.00px;background:#f1f1f1"></div>
<span class="t" style="left:1128.0px;top:366px;font:400 11px/11px 'Liberation Sans',sans-serif;color:#8c8c8c;transform:scaleX(1.0160);">Section Type</span>
<span class="t" style="left:1216.6px;top:366px;font:400 11px/11px 'Liberation Sans',sans-serif;color:#8c8c8c;transform:scaleX(1.2000);">.</span>
<div class="a" style="left:1103px;top:571px;width:239px;height:7px;box-sizing:border-box;background:#f4f4f4;border:1px solid #b0b0b0"></div>
<div class="a" style="left:1px;top:582px;width:1344px;height:4px;background:#b4b4b4"></div>
<div class="a" style="left:1px;top:586px;width:1344px;height:13px;background:#ededed"></div>
<div class="a" style="left:0px;top:598px;width:1329px;height:82px;box-sizing:border-box;background:#fff;border:1px solid #7a7a7a;border-top:2px solid #7a7a7a"></div>
<div class="a" style="left:1329px;top:599px;width:16px;height:81px;background:#f0f0f0"></div>
<svg style="left:1329px;top:599px" width="17" height="81" viewBox="1329 599 17 81" fill="none" stroke="#bdbdbd" stroke-width="1.3">
<path d="M1334 609.500L1337.500 606L1341 609.500"/><path d="M1334 670.500L1337.500 674L1341 670.500"/></svg>
<span class="t" style="left:5.0px;top:604px;font:400 11px/11px 'Liberation Mono',monospace;color:#2a2a2a;transform:scaleX(1.2029);">Generate Walls from a Closed Polygon.</span>
<span class="t" style="left:5.0px;top:620px;font:400 11px/11px 'Liberation Mono',monospace;color:#2a2a2a;transform:scaleX(1.2030);">Please select a Polygon, Floor Area or Diaphragm:</span>
<div class="a" style="left:0;top:680px;width:1345px;height:40px;background:#f0f0f0"></div>
<span class="t" style="left:6.9px;top:695px;font:400 12px/12px 'Liberation Sans',sans-serif;color:#000;transform:scaleX(0.9293);">Snap :</span>
<div class="a" style="left:54px;top:684px;width:50px;height:31.5px;background:#f3f3f3;box-sizing:border-box;border-top:2px solid #858585;border-left:2px solid #858585;border-right:1px solid #fdfdfd;border-bottom:1px solid #fdfdfd"></div>
<div class="a" style="left:105.8px;top:684px;width:67.7px;height:31.5px;background:#f0f0f0;box-sizing:border-box;border-top:1px solid #fdfdfd;border-left:1px solid #fdfdfd;border-right:2px solid #858585;border-bottom:2px solid #858585"></div>
<div class="a" style="left:176px;top:684px;width:66.6px;height:31.5px;background:#f3f3f3;box-sizing:border-box;border-top:2px solid #858585;border-left:2px solid #858585;border-right:1px solid #fdfdfd;border-bottom:1px solid #fdfdfd"></div>
<div class="a" style="left:244.3px;top:684px;width:73.19999999999999px;height:31.5px;background:#f0f0f0;box-sizing:border-box;border-top:1px solid #fdfdfd;border-left:1px solid #fdfdfd;border-right:2px solid #858585;border-bottom:2px solid #858585"></div>
<div class="a" style="left:318.7px;top:684px;width:69.30000000000001px;height:31.5px;background:#f0f0f0;box-sizing:border-box;border-top:1px solid #fdfdfd;border-left:1px solid #fdfdfd;border-right:2px solid #858585;border-bottom:2px solid #858585"></div>
<span class="t" style="left:78.0px;top:695px;font:400 12px/12px 'Liberation Sans',sans-serif;color:#1c1c7c;transform:scaleX(0.9256);">Grid</span>
<span class="t" style="left:130.4px;top:695px;font:400 12px/12px 'Liberation Sans',sans-serif;color:#000;transform:scaleX(0.8833);">ORTHO</span>
<span class="t" style="left:199.4px;top:695px;font:400 12px/12px 'Liberation Sans',sans-serif;color:#1c1c7c;transform:scaleX(0.9098);">OSNAP</span>
<span class="t" style="left:268.7px;top:695px;font:400 12px/12px 'Liberation Sans',sans-serif;color:#000;transform:scaleX(0.8670);">OTRACK</span>
<span class="t" style="left:342.5px;top:695px;font:400 12px/12px 'Liberation Sans',sans-serif;color:#000;transform:scaleX(0.9390);">Nearest</span>
<span class="t" style="left:1106.9px;top:695px;font:400 12px/12px 'Liberation Sans',sans-serif;color:#000;transform:scaleX(0.9373);">L=2.23, </span><span class="t" style="left:1147.2px;top:695px;font:400 12px/12px 'Liberation Sans',sans-serif;color:#000;transform:scaleX(0.9449);">Dx=2.00, </span><span class="t" style="left:1195.7px;top:695px;font:400 12px/12px 'Liberation Sans',sans-serif;color:#000;transform:scaleX(0.9895);">Dy=-1.00   </span><span class="t" style="left:1253.2px;top:695px;font:400 12px/12px 'Liberation Sans',sans-serif;color:#000;transform:scaleX(0.8879);">P(34.00, </span><span class="t" style="left:1296.9px;top:695px;font:400 12px/12px 'Liberation Sans',sans-serif;color:#000;transform:scaleX(0.9054);">18.00)</span>
<svg style="left:50px;top:684px" width="340" height="32" viewBox="50 684 340 32" fill="none">
<rect x="57.300" y="691" width="16.400" height="18" fill="#6cb86c"/>
<path d="M61.400 691V709M65.500 691V709M69.600 691V709M57.300 695.500H73.700M57.300 700H73.700M57.300 704.500H73.700" stroke="#7fc47f" stroke-width=".8"/>
<path d="M110 706.500H122V692" stroke="#222" stroke-width="1.500"/><path d="M118.500 706.500V703H122" stroke="#222" stroke-width="1"/>
<path d="M181 710V692.500H192" stroke="#555" stroke-width="1.600"/><rect x="180" y="691.500" width="4" height="4" fill="#f0f0f0" stroke="#555" stroke-width="1"/>
<path d="M184.500 696.500L184.500 707L187.300 704.300L189.300 708.500L190.800 707.800L188.900 703.700L192.500 703.600Z" fill="#fff" stroke="#666" stroke-width=".9"/>
<path d="M246.500 700.500H263.500M251.500 692V709M258.500 692V709" stroke="#222" stroke-width="1.500"/>
<path d="M322 700.500H337.500M337.500 692V709" stroke="#222" stroke-width="1.500"/>
</svg>
<div class="a" style="left:0;top:0;width:1px;height:720px;background:#5a5a5a"></div><div class="a" style="left:1344px;top:0;width:1px;height:720px;background:#c6c6c6"></div><div class="a" style="left:1345px;top:0;width:1px;height:720px;background:#5e5e5e"></div>
</body></html>
